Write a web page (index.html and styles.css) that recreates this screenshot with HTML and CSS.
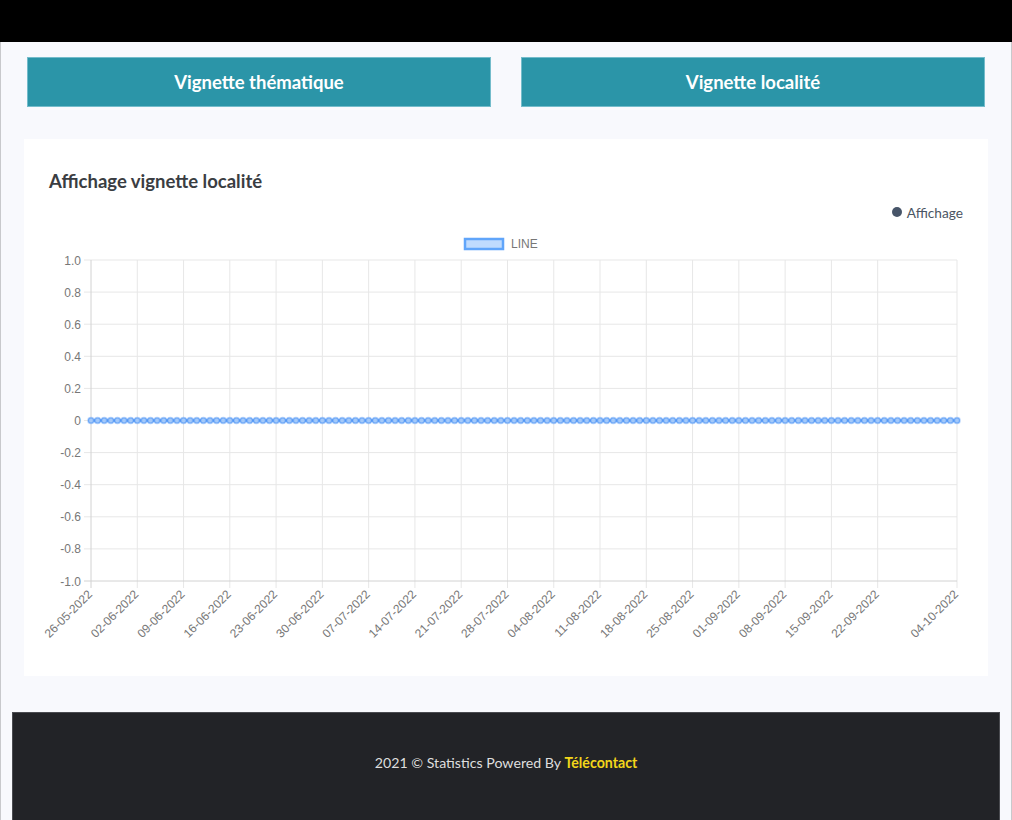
FILE: index.html
```html
<!DOCTYPE html>
<html lang="fr">
<head>
<meta charset="utf-8">
<title>Affichage vignette localité</title>
<link rel="stylesheet" href="styles.css">
</head>
<body>
<div class="topbar"></div>
<div class="page">
  <div class="tabs">
    <a class="tab" href="#">Vignette thématique</a>
    <a class="tab" href="#">Vignette localité</a>
  </div>
  <section class="card">
    <h2 class="card-title">Affichage vignette localité</h2>
    <div class="legend"><span class="legend-dot"></span><span class="legend-text">Affichage</span></div>
    <svg class="chart" width="964" height="455" viewBox="0 0 964 455">
      <defs>
        <pattern id="pts" x="63.6947" y="195.5" width="6.6107" height="8" patternUnits="userSpaceOnUse">
          <circle cx="3.3053" cy="4" r="2.8" class="pt"/>
        </pattern>
      </defs>
      <!-- dataset legend -->
      <rect x="441" y="18" width="38" height="10" class="leg-box"/>
      <text x="487" y="27" class="lbl">LINE</text>
      <!-- horizontal grid -->
      <g class="grid">
        <line x1="60" y1="39" x2="933" y2="39"/>
        <line x1="60" y1="71.1" x2="933" y2="71.1"/>
        <line x1="60" y1="103.2" x2="933" y2="103.2"/>
        <line x1="60" y1="135.3" x2="933" y2="135.3"/>
        <line x1="60" y1="167.4" x2="933" y2="167.4"/>
        <line x1="60" y1="199.5" x2="933" y2="199.5"/>
        <line x1="60" y1="231.6" x2="933" y2="231.6"/>
        <line x1="60" y1="263.7" x2="933" y2="263.7"/>
        <line x1="60" y1="295.8" x2="933" y2="295.8"/>
        <line x1="60" y1="327.9" x2="933" y2="327.9"/>
      </g>
      <!-- vertical grid -->
      <g class="grid">
        <line x1="113.27" y1="39" x2="113.27" y2="367"/>
        <line x1="159.55" y1="39" x2="159.55" y2="367"/>
        <line x1="205.82" y1="39" x2="205.82" y2="367"/>
        <line x1="252.10" y1="39" x2="252.10" y2="367"/>
        <line x1="298.37" y1="39" x2="298.37" y2="367"/>
        <line x1="344.65" y1="39" x2="344.65" y2="367"/>
        <line x1="390.92" y1="39" x2="390.92" y2="367"/>
        <line x1="437.20" y1="39" x2="437.20" y2="367"/>
        <line x1="483.47" y1="39" x2="483.47" y2="367"/>
        <line x1="529.75" y1="39" x2="529.75" y2="367"/>
        <line x1="576.02" y1="39" x2="576.02" y2="367"/>
        <line x1="622.30" y1="39" x2="622.30" y2="367"/>
        <line x1="668.57" y1="39" x2="668.57" y2="367"/>
        <line x1="714.85" y1="39" x2="714.85" y2="367"/>
        <line x1="761.12" y1="39" x2="761.12" y2="367"/>
        <line x1="807.40" y1="39" x2="807.40" y2="367"/>
        <line x1="853.67" y1="39" x2="853.67" y2="367"/>
        <line x1="933" y1="39" x2="933" y2="367"/>
      </g>
      <!-- axes -->
      <g class="axis">
        <line x1="67" y1="39" x2="67" y2="367"/>
        <line x1="60" y1="360" x2="933" y2="360"/>
      </g>
      <!-- y labels -->
      <g class="lbl ylbl">
        <text x="57" y="43.5">1.0</text>
        <text x="57" y="75.6">0.8</text>
        <text x="57" y="107.7">0.6</text>
        <text x="57" y="139.8">0.4</text>
        <text x="57" y="171.9">0.2</text>
        <text x="57" y="204">0</text>
        <text x="57" y="236.1">-0.2</text>
        <text x="57" y="268.2">-0.4</text>
        <text x="57" y="300.3">-0.6</text>
        <text x="57" y="332.4">-0.8</text>
        <text x="57" y="364.5">-1.0</text>
      </g>
      <!-- data -->
      <line x1="67" y1="199.5" x2="933" y2="199.5" class="data-line"/>
      <rect x="63.6947" y="195.5" width="872.61" height="8" fill="url(#pts)"/>
      <!-- x labels -->
      <g class="lbl xlbl">
        <text x="69" y="374" transform="rotate(-45 69 374)">26-05-2022</text>
        <text x="115.27" y="374" transform="rotate(-45 115.27 374)">02-06-2022</text>
        <text x="161.55" y="374" transform="rotate(-45 161.55 374)">09-06-2022</text>
        <text x="207.82" y="374" transform="rotate(-45 207.82 374)">16-06-2022</text>
        <text x="254.10" y="374" transform="rotate(-45 254.10 374)">23-06-2022</text>
        <text x="300.37" y="374" transform="rotate(-45 300.37 374)">30-06-2022</text>
        <text x="346.65" y="374" transform="rotate(-45 346.65 374)">07-07-2022</text>
        <text x="392.92" y="374" transform="rotate(-45 392.92 374)">14-07-2022</text>
        <text x="439.20" y="374" transform="rotate(-45 439.20 374)">21-07-2022</text>
        <text x="485.47" y="374" transform="rotate(-45 485.47 374)">28-07-2022</text>
        <text x="531.75" y="374" transform="rotate(-45 531.75 374)">04-08-2022</text>
        <text x="578.02" y="374" transform="rotate(-45 578.02 374)">11-08-2022</text>
        <text x="624.30" y="374" transform="rotate(-45 624.30 374)">18-08-2022</text>
        <text x="670.57" y="374" transform="rotate(-45 670.57 374)">25-08-2022</text>
        <text x="716.85" y="374" transform="rotate(-45 716.85 374)">01-09-2022</text>
        <text x="763.12" y="374" transform="rotate(-45 763.12 374)">08-09-2022</text>
        <text x="809.40" y="374" transform="rotate(-45 809.40 374)">15-09-2022</text>
        <text x="855.67" y="374" transform="rotate(-45 855.67 374)">22-09-2022</text>
        <text x="935" y="374" transform="rotate(-45 935 374)">04-10-2022</text>
      </g>
    </svg>
  </section>
  <footer class="footer">
    <p>2021 © Statistics Powered By <span class="brand">Télécontact</span></p>
  </footer>
</div>
</body>
</html>
```
FILE: styles.css
```css
html, body {
  margin: 0;
  padding: 0;
}
body {
  background: #f8f9fd;
  font-family: Lato, "Open Sans", "Liberation Sans", sans-serif;
  color: #343a40;
  overflow: hidden;
}
.topbar {
  height: 42px;
  background: #000;
}
.page {
  border-left: 1px solid #c8c9cc;
  border-right: 1px solid #c8c9cc;
  min-height: 778px;
}
.tabs {
  display: flex;
  gap: 30px;
  padding: 15px 26px 0;
}
.tab {
  flex: 1;
  height: 50px;
  box-sizing: border-box;
  display: flex;
  align-items: center;
  justify-content: center;
  background: #2b95a8;
  border: 1px solid #74bccb;
  color: #fff;
  font-weight: 700;
  font-size: 18.5px;
  text-decoration: none;
}
.card {
  margin: 32px 23px 0;
  background: #fff;
}
.card-title {
  margin: 0;
  padding: 30px 25px 0;
  font-size: 18.5px;
  line-height: 24px;
  font-weight: 700;
  color: #3a3d42;
}
.legend {
  margin-top: 10px;
  padding-right: 25px;
  display: flex;
  justify-content: flex-end;
  align-items: center;
  gap: 5px;
  height: 18px;
  font-size: 13.7px;
  color: #4b5563;
}
.legend-dot {
  width: 10px;
  height: 10px;
  border-radius: 50%;
  background: #475569;
}
.chart {
  display: block;
}
.chart text {
  font-family: "Liberation Sans", Arial, sans-serif;
  font-size: 12px;
  fill: #777;
}
.ylbl text {
  text-anchor: end;
}
.xlbl text {
  text-anchor: end;
}
.grid line {
  stroke: #e7e7e7;
  stroke-width: 1;
}
.axis line {
  stroke: #d2d2d2;
  stroke-width: 1;
}
.leg-box {
  fill: #bfdbfe;
  stroke: #60a5fa;
  stroke-width: 2.5;
}
.data-line {
  stroke: #5f9ff7;
  stroke-width: 2;
}
.pt {
  fill: #a3c9fa;
  stroke: #4f95f5;
  stroke-width: 1;
}
.footer {
  margin: 36px 11px 0;
  background: #222327;
  border: 1px solid #4a4b50;
  border-bottom: 0;
  height: 130px;
  box-sizing: border-box;
  padding-top: 40px;
  text-align: center;
}
.footer p {
  margin: 0;
  font-size: 14.2px;
  line-height: 20px;
  color: #dedede;
}
.brand {
  color: #f3d61a;
  font-weight: 700;
}
```
